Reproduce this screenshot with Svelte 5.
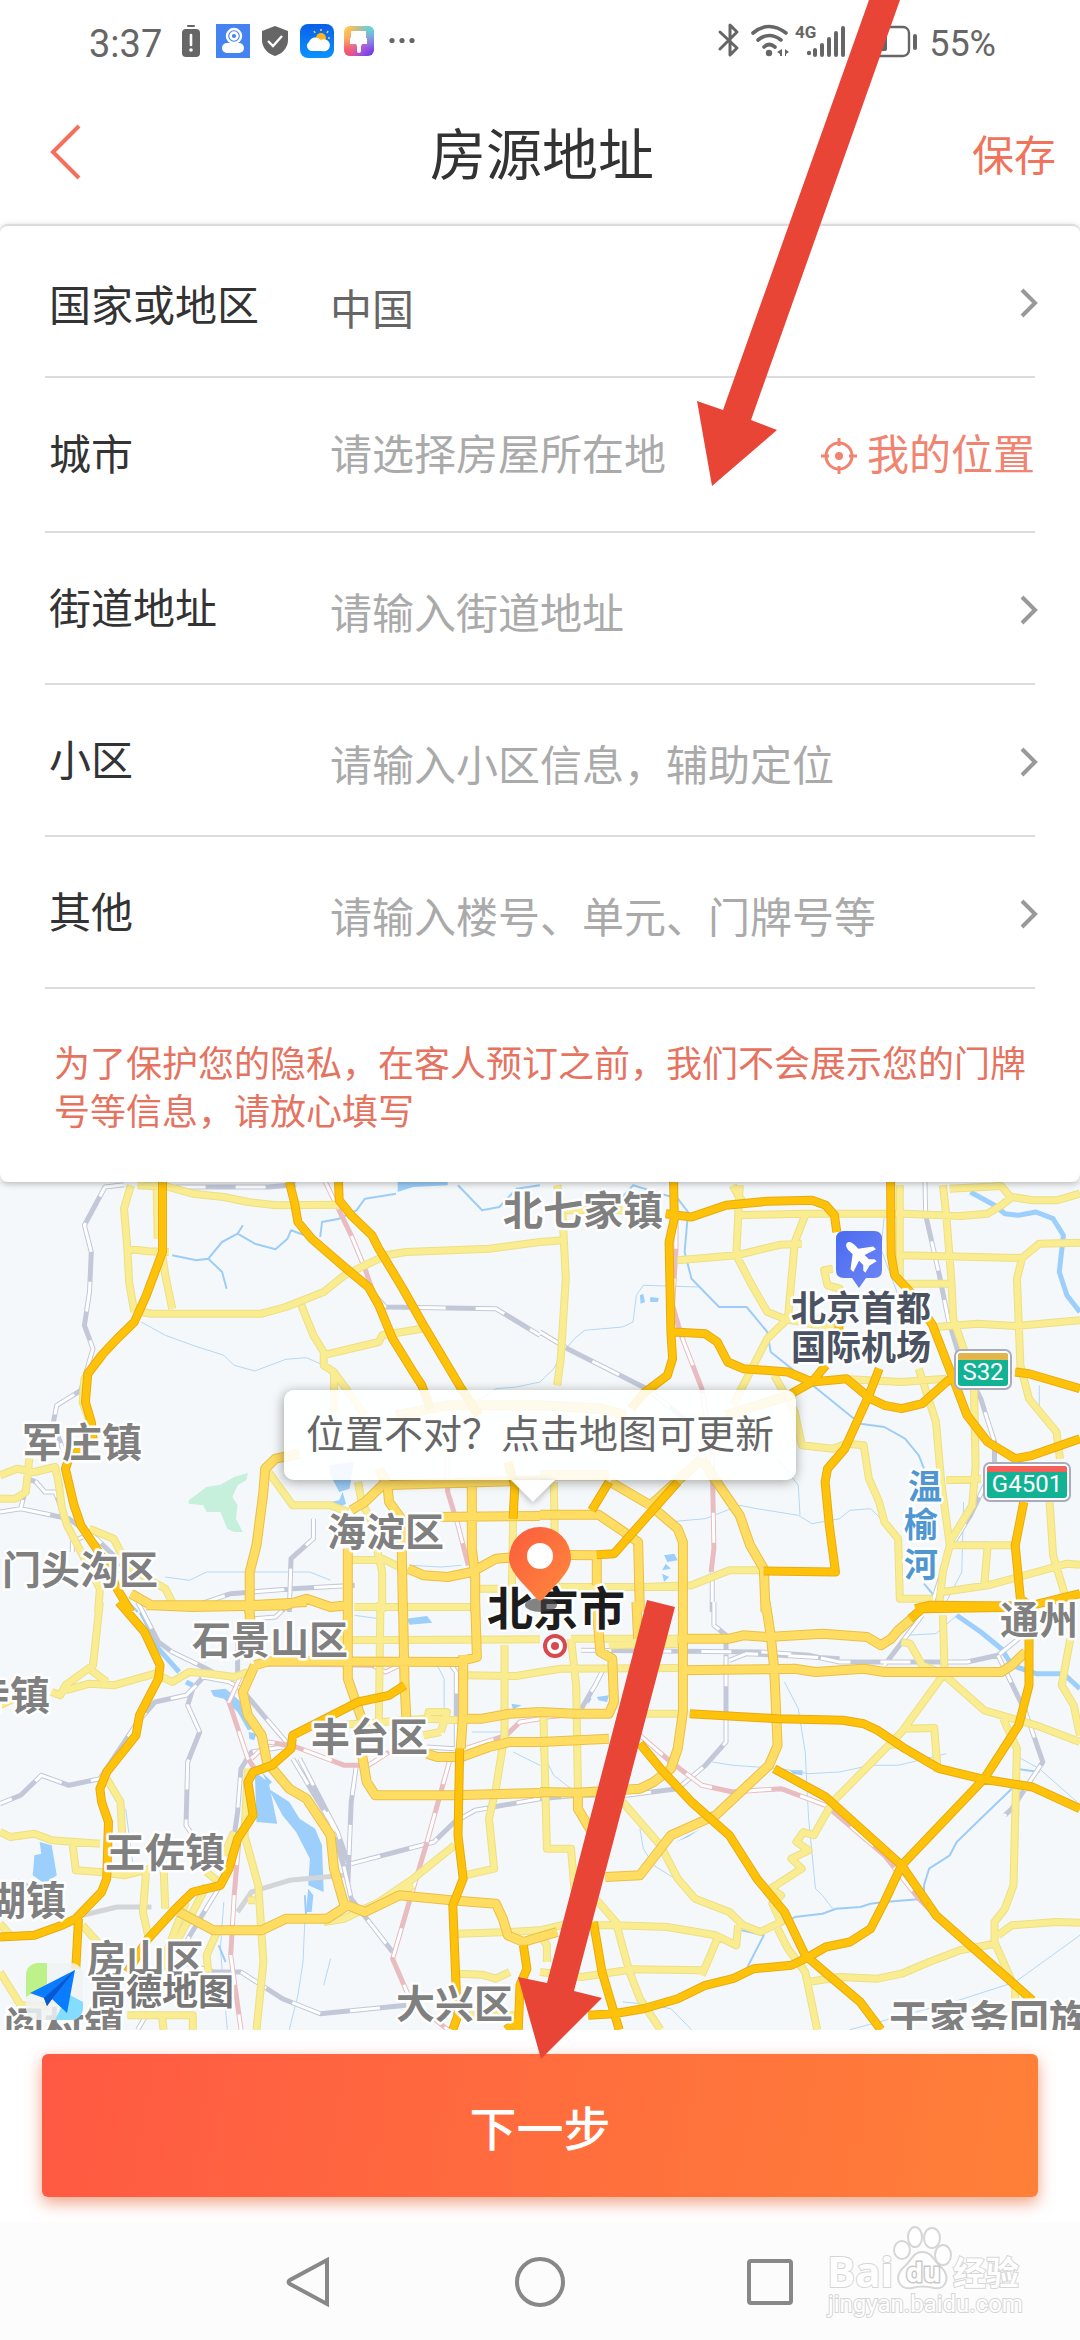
<script>
  let country = $state('中国');
  let city = $state('');

  // Map survey sheets: origin of each sheet on the 1080 x 848 map.
  const sheets = { nw: [0, -10], ne: [540, -10], sw: [0, 420], se: [540, 420] };

  // Turns "x,y x,y ..." in sheet units into a path on the map; "|" starts a new line.
  function trace(sheet, text) {
    const [ox, oy] = sheets[sheet];
    return text
      .split('|')
      .map((line) =>
        'M' +
        line
          .trim()
          .split(/\s+/)
          .map((p) => {
            const [x, y] = p.split(',').map(Number);
            return `${Math.round((x / 2.904 + ox) * 10) / 10} ${Math.round((y / 3 + oy) * 10) / 10}`;
          })
          .join('L')
      )
      .join('');
  }

  const join = (layer) => Object.entries(layer).map(([s, t]) => trace(s, t)).join('');

  const streams = join({
    nw: '410,450 480,490 560,520 650,550 680,580 740,597 830,562 890,557 930,575|1390,685 1440,650 1500,645 1568,630|480,1215 550,1225 600,1200 900,1200 960,1225|1190,1180 1280,1185 1340,1180',
    ne: '0,630 40,590 60,550 100,500 130,475 240,465 270,450 280,370 300,340 460,345|370,1050 480,1040 580,1000 630,1010 750,1030 790,1055 870,1040 900,1015 960,1010 1000,1050|690,860 750,940 755,1030|1230,990 1225,1200 1180,1290|1000,130 990,230 1040,370|1450,640 1450,700|1220,1110 1300,1110',
    sw: '885,960 880,1080 865,1180 840,1283|650,900 640,1040 660,1283|960,1070 940,1150|365,620 385,780|1030,40 1100,50|1260,170 1290,230 1290,330|1370,390 1470,390|1490,450 1568,490',
    se: '710,240 750,320 770,450 780,650 800,860 820,880 850,920|500,480 560,490 700,500 780,515 870,510 960,490 1040,490 1180,455|1380,460 1450,500 1560,600|1568,1000 1380,1140 1200,1200 900,1283|290,680 300,740 330,790 400,835|0,440 40,520 90,560|240,1200 300,1205 380,1220 440,1283|1060,100 1150,95 1210,40'
  });

  const rivers = join({
    nw: '500,250 570,265 605,260 645,210 690,185 740,215 800,232 835,200 845,175 885,190|605,260 645,300 658,350|690,185 705,160|930,195 935,150 985,140 1035,115 1060,80 1150,65|1330,40 1400,115 1450,105 1500,50 1568,40|355,1270 400,1320',
    ne: '240,75 270,40 400,80 430,120 420,240 440,320 520,405 600,405 660,480 670,540 780,630 930,755 1000,765 1060,800 1100,850 1115,890|1115,1235 1160,1290',
    sw: '885,880 890,960|635,1030 655,1080',
    se: '1370,560 1290,640 1210,720 1190,760 1130,800 1115,850 1115,890 1000,900 960,905 930,915 860,920 820,935 740,945 700,970|585,985 650,1000 600,1100|1380,500 1450,510'
  });

  const canals = join({
    ne: '1250,60 1320,100 1350,125 1390,130 1440,120 1490,140 1520,190 1508,300 1530,370 1568,420',
    sw: '410,30 440,90 460,140 520,210|540,240 560,250',
    se: '1210,40 1280,90 1340,140 1370,190 1440,215 1520,215 1568,260'
  });

  const lakes = join({
    nw: '1155,30 1300,30 1300,40 1200,45 1155,60|955,880 985,875 1028,870 1015,950 985,960 960,910|960,990 985,985 995,960 1005,995 980,1008',
    ne: '290,370 300,365 305,390 292,395|320,375 345,378 342,390 320,390|360,1150 390,1145 400,1165 370,1170|365,1175 380,1190 355,1195|355,1205 375,1215 360,1230',
    sw: '612,265 655,260 700,300 735,380 720,385 690,330 650,290 620,283|722,390 745,395 738,415 724,410|740,510 780,540 805,665 745,660|760,510 790,540 780,550|780,560 840,600 870,650 915,680 935,730 940,870 895,850 900,770 860,690 820,640|895,860 910,880 905,930 888,930|115,720 150,730 165,820 130,845 95,820 100,760 120,755|52,830 90,850 70,880|1180,50 1240,42 1255,62 1190,68|1485,305 1515,310 1490,322',
    se: '725,505 762,505 762,520 735,515|135,280 150,290 140,305|165,285 200,280 195,300 170,295|395,720 430,700 465,682 430,705'
  });

  const parks = trace(
    'nw',
    '548,985 600,945 640,938 680,915 720,903 715,925 690,940 675,975 690,1000 685,1040 705,1080 680,1080 660,1070 640,1020 600,1020 590,1000 548,995'
  );

  const minor = join({
    nw: '380,40 360,110 370,230 375,330 390,420|370,230 430,238 490,240|470,240 480,310 500,410|455,40 458,200|400,40 490,45 560,65 650,75 720,90 800,100 990,98|410,420 440,425 760,425 830,405 940,360 1000,310 1060,280 1120,250 1180,240 1420,230 1568,210|875,400 910,490 940,540 940,580 970,600 970,720|970,600 1060,730|945,548 1100,510 1110,490 1225,470|0,910 50,890 100,900 160,885 170,930 180,1010 195,1060 220,1110 270,1210 290,1250 285,1320|85,860 75,960 45,980 0,980|300,550 245,620 240,690 265,760|780,900 850,1000 960,1000 1010,1020|260,1070 330,1100 370,1180 420,1215 480,1250 500,1290|1040,930 1050,990 1080,1050|1090,1110 1110,1200 1110,1320|1020,1165 1110,1160 1170,1190|1490,1040 1485,1320|1385,1250 1480,1250|1030,1305 1380,1305',
    ne: '50,40 65,120 75,320 60,560 50,640|40,930 45,1240|0,210 65,205|75,115 240,115|400,265 570,250 700,218 760,215|580,40 570,250 610,330 660,420 710,440|570,130 760,125 1060,125 1220,132 1300,125 1340,100 1370,75 1430,85 1500,85 1568,65|770,130 740,210 720,440 660,500 620,580 560,700|710,440 860,470|1150,465 1270,455 1380,462 1568,445|1045,40 1045,330|1170,40 1180,130 1195,330 1200,440 1230,530 1260,640 1265,880 1255,1000 1190,1110|1190,50 1340,42 1370,80|1050,250 1400,258 1450,215 1568,212|1400,258 1385,320 1395,580 1420,680 1500,780 1510,860|1050,335 1190,335|870,620 1050,630 1180,620|680,610 740,720 760,820 850,830 890,815 940,820 955,920 985,990 1000,1050 1040,1100 1045,1280 1140,1280|1100,590 1150,750 1165,930 1190,1120 1170,1200 1160,1290|1180,925 1280,920|1190,1120 1390,1120|1480,990 1490,1150 1525,1270|1390,1215 1530,1175 1568,1178|1170,1260 1300,1240 1390,1215|1300,1120 1290,1240|850,290 825,295 835,340 870,350 865,450|300,1245 440,1240 550,1195 650,1195|0,1245 400,1245|560,40 575,70 590,90',
    sw: '290,0 270,190 190,250 175,280 150,270|0,310 40,290|190,265 260,245 330,250 450,215 500,240 550,210 610,215 680,225 720,210|265,205 310,240|310,530 350,600 355,700|0,690 30,705 100,695 150,715 290,725|210,720 220,805 290,810 360,820 440,800|425,800 415,930 430,1000|475,800 480,920|240,970 300,1040|720,500 710,700 750,850 765,1080 745,1283|600,810 635,840|600,850 560,930 470,1100|630,990 600,1060 605,1110|680,690 650,760|540,900 480,1060|940,115 1568,112|1105,0 1100,360|980,370 1240,350 1330,355|1465,130 1465,400 1440,560 1420,650 1435,800 1350,820|1360,220 1500,222 1568,210|1280,390 1298,330 1245,330 1240,360|1230,400 1280,390|1330,995 1480,990 1568,985|1330,1115 1400,1118 1440,1130 1480,1110|1320,730 1200,830 1100,900 1000,950 940,960|1170,870 1200,850|0,1110 60,1210 200,1215|370,1240 560,1240 560,1283|470,1240 475,1283|0,965 30,1000|1345,1240 1500,1240|720,895 740,895',
    se: '90,110 400,110|0,210 60,200 400,198|90,110 105,250 110,560|10,340 20,740 90,740 100,860 170,900 220,960 260,1110 290,1190 350,1283|230,335 400,335|200,130 420,125|240,600 350,730 400,830 450,890 550,930 590,970 640,990 700,960 675,905 700,880 670,860 760,800 730,770 780,745 745,720 765,690 795,700 850,600 1050,390 1170,220|1170,40 1175,210|1050,120 1075,125 1110,190 1170,215 1290,325 1440,370 1568,420|1060,380 1145,378 1155,510|1345,350 1385,440 1375,850 1350,920 1320,960 1320,1020 1380,1160 1380,1200|1330,1000 1370,970 1500,960 1568,962|1540,110 1515,250 1550,310 1568,400|780,1140 870,1125 980,1130 1050,1115 1130,1080 1220,1045 1320,1025|690,980 720,1040 770,1110 805,1283|0,985 60,970 220,970 370,975 510,1000 570,1030 575,970|515,1010 470,1120|0,1110 120,1125 270,1102 470,1105|0,1000 20,1030 20,1080|1010,430 1050,425'
  });

  const trunk = join({
    nw: '870,845 800,860 770,890 765,960 745,1120 725,1200 725,1340|380,1265 440,1300 560,1305 830,1300 890,1280 960,1305 1010,1300|1010,1320 1010,1130|1020,1015 1060,990 1110,940 1568,925|1100,890 1125,940 1130,990 1165,1040 1170,1320|1370,930 1370,1130 1380,1210 1380,1320|1250,1035 1568,1032|1185,1190 1230,1210 1300,1215 1370,1200 1440,1160 1568,1150|1150,730 1300,700 1568,700',
    ne: '0,1028 170,1028 230,1070 285,1110 290,1320|205,930 320,1000 400,1070 415,1110 415,1320|470,860 500,910 580,1030 610,1120 650,1190 655,1320|0,1148 165,1150 165,1240|470,860 310,1010|0,700 180,710 250,730|0,910 200,910|740,665 540,730',
    sw: '425,10 545,10 720,10 890,0|720,0 728,60|740,190 780,178 1330,180 1385,165 1380,0|740,190 705,270 720,340 760,400 775,480 840,560 890,590 960,700 970,800 1000,910|1010,0 1010,230 1050,350|1170,0 1175,250 1180,345|1345,160 1345,330 1338,440|1350,350 1400,350 1480,335 1568,330|1330,465 1270,465 1240,455|1340,465 1420,435 1480,420 1568,420|1050,450 1065,540 1090,580 1320,580 1568,573|520,930 620,985 760,985 830,950 950,950 1010,910 1060,930 1160,880 1310,895 1440,905 1460,950 1475,1000 1520,1020 1568,1005',
    se: '400,110 550,110 590,100 660,105 820,95 950,105 990,130 1020,110 1040,85 1080,50|410,205 740,200 800,210 940,200 1000,210 1340,210 1370,190 1410,150|280,0 285,110|415,0 415,330 400,440 380,500 330,540 290,560 110,572 0,570|655,0 670,100 680,200 690,430 665,490 510,640 380,700 290,820 190,825|165,20 175,150 210,170 215,300 200,335 100,335 0,330|0,420 110,415 200,410|110,560 110,620 150,690|0,1005 50,990'
  });

  const freeway = join({
    nw: '472,30 472,240 425,370 390,450 340,500 295,550 255,605 248,690 265,750 270,800 200,860 190,890 215,1000 235,1060 300,1160 340,1250 380,1320|840,30 855,90 865,150 905,200 1000,285 1070,345 1100,400 1140,500 1200,600 1225,640 1250,710|983,30 985,85 1020,130 1080,190 1100,230 1170,350 1230,460 1340,650 1390,730|1475,870 1495,940 1490,1040',
    ne: '388,30 390,140 375,210 380,480 385,560 370,610 300,665 265,710|365,125 440,135 540,100 660,88 790,85 830,100 855,130 862,180|1018,30 1020,250 1030,310 1080,365 1140,460 1200,620 1240,730 1300,810 1380,860 1430,850 1568,800|390,480 480,485 515,510 545,570 590,590 720,600 790,630 890,620 960,680 1000,700 1050,710 1110,695 1180,630 1200,615|1380,600 1420,605 1568,650|985,590 955,670 885,830 835,890 828,930 840,1060 858,1200 650,1197|830,580 790,630 730,665|400,930 215,1145 165,1148|200,930 150,1015|1405,990 1380,1120 1395,1280 1420,1300|1090,1310 1130,1300 1420,1302 1568,1265|868,440 868,475',
    sw: '345,0 420,90 465,190 460,230 405,340 395,400 310,510 290,560 295,600 315,660 310,830 295,870 220,950 180,970 100,1000 0,1005|228,950 220,1100|1175,250 1130,280 1040,300 850,400 845,440 790,490 735,510 720,540 735,640 690,710 665,800 640,850 560,870 510,920 430,1010 400,1060 370,1110|1335,440 1330,700 1345,830 1315,910 1325,1170 1330,1240 1315,1283|1520,1030 1530,1100 1510,1150 1505,1283|1470,1283 1510,1250',
    se: '435,335 690,350 880,355 940,365 980,385 1060,440 1160,500 1280,530 1430,555 1568,620|290,425 350,500 440,600 550,700 630,830 710,930 770,1060 850,1130 930,1200 990,1283|680,500 830,585 1050,790 1150,940 1430,1195|1420,110 1420,250 1390,370 1290,530 1050,790 1000,900 960,980 900,1020 830,1035 780,1065 730,1090 620,1100 560,1130 480,1150 400,1190 300,1220 215,1235 140,1240|155,960 180,1110 230,1283|1075,50 1110,20 1440,15'
  });

  const rail = join({
    nw: '360,38 305,45 245,160 265,240 260,360 245,460 270,530 235,655 165,700 155,750 185,840|510,45 600,45 780,45 860,38|1060,340 1120,405 1440,410 1568,490|0,1020 60,1010 75,950 80,920 105,930 130,960 160,960 175,1000|60,1010 200,1040 280,1100 330,1150 350,1200|240,1095 210,1110 210,1140|910,1040 910,1100 845,1160 840,1320|570,1300 670,1265 850,1250 1030,1240',
    ne: '0,480 80,530 310,650 420,740|1118,30 1120,130 1160,310 1185,440 1220,560 1280,680 1320,810 1320,880 1250,1030 1190,1130 1140,1290|500,1200 500,1320',
    sw: '400,0 430,60 460,120 500,150 600,200 700,260 790,370 840,430|850,470 960,660 1000,800 1020,890 1140,1050|670,240 590,225 560,260 545,310 580,390 545,480 540,670 560,700|570,250 540,280 450,300 400,360 290,530 200,550 120,520 60,580 0,605|740,50 800,45 825,20|870,470 980,690 1010,780|1035,490 1020,600 1010,850|1310,190 1325,210 1325,440|1240,435 1320,440|1020,785 1260,720 1320,660 1380,625 1568,590|820,435 730,450 700,500 690,630 680,700|640,850 540,1020|530,1080 620,1110 700,1110 820,1190 930,1235 1180,1210|690,80 690,220|400,1283 430,1230',
    se: '505,0 505,70 540,100 540,420 480,490 400,560 250,580 110,580 0,590|120,145 640,150 780,160 870,180 1240,180 1330,160 1390,110|550,175 600,155 700,160 870,170|1110,40 1000,190|1330,160 1410,330 1460,480 1370,620 1350,640|190,190 160,250 120,320'
  });

  const metro = join({
    nw: '945,30 1020,190 1060,290 1090,380 1140,500 1210,620|1298,850 1300,960 1330,1060 1360,1180',
    ne: '395,140 395,230 385,400 410,490 470,650 500,850 505,1130 497,1200',
    sw: '700,220 665,300 720,470 740,500|740,190 800,185 1080,190 1120,210 1160,190|730,470 780,420 860,435 1000,490 1070,490 1130,450|1310,460 1240,720 1180,930 1140,1070 1190,1190 1300,1283|695,700 680,880 670,1060 700,1283|1350,440 1470,400 1510,360 1568,350',
    se: '290,400 380,480 470,550 560,570 700,560 830,610 1000,760 1100,890 1160,950|20,345 70,340'
  });

  const tunnel = trace('sw', '240,940 340,915 440,915|690,930 730,870 840,835 1000,820');

  const towns = [
    [503, 43, '北七家镇'],
    [22, 275, '军庄镇'],
    [-30, 528, '寺镇'],
    [105, 685, '王佐镇'],
    [-14, 733, '湖镇'],
    [4, 859, '阎村镇'],
    [889, 852, '于家务回族']
  ];

  const districts = [
    [327, 364, '海淀区'],
    [2, 402, '门头沟区'],
    [192, 472, '石景山区'],
    [311, 569, '丰台区'],
    [1000, 452, '通州'],
    [87, 791, '房山区'],
    [396, 836, '大兴区']
  ];

  const fields = [
    { id: 'street', label: '街道地址', hint: '请输入街道地址' },
    { id: 'estate', label: '小区', hint: '请输入小区信息，辅助定位' },
    { id: 'other', label: '其他', hint: '请输入楼号、单元、门牌号等' }
  ];
  const values = $state({ street: '', estate: '', other: '' });
</script>

{#snippet chevron()}
  <svg class="chevron" viewBox="0 0 20 32" aria-hidden="true"><path d="M3 3L16 16L3 29" /></svg>
{/snippet}

<div class="screen">
  <div class="status">
    <div class="group">
      <time class="clock">3:37</time>
      <svg class="tray" viewBox="0 0 236 40" aria-hidden="true">
        <defs>
          <linearGradient id="sky" x1="0" y1="0" x2="0" y2="1"><stop offset="0" stop-color="#0a5fe8" /><stop offset="1" stop-color="#0a93ff" /></linearGradient>
          <linearGradient id="rainbow" x1="0" y1="0" x2="1" y2="1"><stop offset="0" stop-color="#ffd24a" /><stop offset=".35" stop-color="#f9a36a" /><stop offset=".65" stop-color="#b558d8" /><stop offset="1" stop-color="#5a3cf0" /></linearGradient>
          <radialGradient id="aqua" cx="1" cy="0" r=".8"><stop offset="0" stop-color="#45e8ea" /><stop offset="1" stop-color="#45e8ea" stop-opacity="0" /></radialGradient>
          <radialGradient id="rose" cx="0" cy="1" r=".6"><stop offset="0" stop-color="#ff4560" /><stop offset="1" stop-color="#ff4560" stop-opacity="0" /></radialGradient>
        </defs>
        <rect x="5" y="5" width="8" height="2" rx="1" fill="#666" />
        <rect x="0" y="9" width="18" height="28" rx="4" fill="#666" />
        <path d="M9 15V25" stroke="#fff" stroke-width="2.6" stroke-linecap="round" /><circle cx="9" cy="30" r="1.8" fill="#fff" />
        <rect x="34" y="4" width="34" height="34" fill="#4583f0" />
        <circle cx="52" cy="16" r="7" fill="#4583f0" stroke="#fff" stroke-width="2.4" />
        <circle cx="52" cy="16" r="3.4" fill="none" stroke="#fff" stroke-width="2.6" />
        <rect x="40" y="23" width="22" height="10" rx="5" fill="#fff" />
        <path d="M93 6L106 11V20C106 28 100 34 93 36C86 34 80 28 80 20V11Z" fill="#666" />
        <path d="M86 21L91 26L100 16" fill="none" stroke="#fff" stroke-width="2.4" />
        <rect x="118" y="4" width="34" height="34" rx="8" fill="url(#sky)" />
        <circle cx="139" cy="18" r="5" fill="#ffb61e" />
        <path d="M139 11V9M145 13L146 11M133 13L132 11M146 18H148M145 23L147 24" stroke="#ffc94a" stroke-width="1.6" />
        <path d="M130 31A5 5 0 0 1 127 22A7 7 0 0 1 139 20A6 6 0 1 1 140 31Z" fill="#fff" />
        <rect x="162" y="6" width="30" height="30" rx="6" fill="url(#rainbow)" />
        <rect x="162" y="6" width="30" height="30" rx="6" fill="url(#aqua)" />
        <rect x="162" y="6" width="30" height="30" rx="6" fill="url(#rose)" />
        <path d="M169 11H184V18H185V24H180L179 26V31A2 2 0 0 1 175 31V26L174 24H168V18H169Z" fill="#fff" />
        <circle cx="210" cy="20.500" r="2.600" fill="#666" /><circle cx="220" cy="20.500" r="2.600" fill="#666" /><circle cx="230" cy="20.500" r="2.600" fill="#666" />
      </svg>
    </div>
    <div class="group">
      <svg class="radio" viewBox="0 0 204 40" aria-hidden="true">
        <g fill="none" stroke="#666" stroke-width="3" stroke-linecap="round" stroke-linejoin="round">
          <path d="M3 12L20 28L13 35V5L20 12L3 29" />
          <path d="M36 13Q52 0 69 13M41 20Q52 11 64 20M47 27Q52 22 58 27" stroke-width="3.600" />
          <path d="M104 35V30M111 35V25M118 35V19M125 35V13M132 35V8" stroke-width="4" transform="translate(-6)" />
        </g>
        <circle cx="52" cy="33" r="3.200" fill="#666" />
        <path d="M65 29V36H63V34L60 32ZM67 29V36M68 29L72 32L69 34V36H68Z" fill="#666" />
        <text class="gen" x="78" y="18">4G</text>
        <circle cx="92" cy="33" r="2.200" fill="#666" />
        <rect x="154" y="7" width="38" height="29" rx="6" fill="none" stroke="#666" stroke-width="2.400" />
        <rect x="158" y="11" width="12" height="20" rx="2" fill="#666" />
        <rect x="196" y="14" width="4" height="16" rx="2" fill="#666" />
      </svg>
      <span class="charge">55%</span>
    </div>
  </div>

  <header class="bar">
    <button class="back" aria-label="返回">
      <svg viewBox="0 0 32 56" aria-hidden="true"><path d="M29 2L3 28L29 54" /></svg>
    </button>
    <h1>房源地址</h1>
    <button class="save">保存</button>
  </header>

  <main>
    <form class="card" onsubmit={(e) => e.preventDefault()}>
      <div class="row country">
        <label for="country">国家或地区</label>
        <select id="country" bind:value={country}><option>中国</option></select>
        {@render chevron()}
      </div>
      <div class="row city">
        <label for="city">城市</label>
        <input id="city" placeholder="请选择房屋所在地" bind:value={city} />
        <button type="button" class="locate">
          <svg viewBox="0 0 36 36" aria-hidden="true">
            <circle cx="18" cy="18" r="13" /><path d="M18 0V8M18 28V36M0 18H8M28 18H36" /><circle class="dot" cx="18" cy="18" r="4" />
          </svg>
          我的位置
        </button>
      </div>
      {#each fields as field (field.id)}
        <div class="row typed">
          <label for={field.id}>{field.label}</label>
          <input id={field.id} placeholder={field.hint} bind:value={values[field.id]} />
          {@render chevron()}
        </div>
      {/each}
      <p class="notice">为了保护您的隐私，在客人预订之前，我们不会展示您的门牌号等信息，请放心填写</p>
    </form>

    <section class="map" aria-label="地图">
      <svg class="canvas" viewBox="0 0 1080 848">
        <defs>
          <linearGradient id="pin" x1="0" y1="0" x2="1" y2="1"><stop offset="0" stop-color="#fb5b3d" /><stop offset="1" stop-color="#ff8a3c" /></linearGradient>
          <linearGradient id="plane" x1="0" y1="0" x2="1" y2="1"><stop offset="0" stop-color="#4a6bf0" /><stop offset="1" stop-color="#6f86f5" /></linearGradient>
          <clipPath id="tile"><rect x="26" y="781" width="57" height="57" rx="12" /></clipPath>
        </defs>
        <path d={parks} fill="#c6efdc" />
        <path d={lakes} fill="#9ccffb" />
        <g class="lines">
          <path d={streams} stroke="#b4d8f6" stroke-width="1" />
          <path d={rivers} stroke="#9dcdf7" stroke-width="2" />
          <path d={canals} stroke="#9ccffb" stroke-width="5" />
          <path d={tunnel} stroke="#d3d5d9" stroke-width="5" />
          <path d={rail} stroke="#c3c8d9" stroke-width="5" />
          <path d={rail} class="ties" />
          <path d={metro} stroke="#e8bcc0" stroke-width="5" />
          <path d={metro} class="ties" />
          <path d={minor} stroke="#ecdf86" stroke-width="8" />
          <path d={minor} stroke="#faec90" stroke-width="6" />
          <path d={trunk} stroke="#e8c04a" stroke-width="10" />
          <path d={trunk} stroke="#ffdc62" stroke-width="8" />
          <path d={freeway} stroke="#e6ac10" stroke-width="9" />
          <path d={freeway} stroke="#ffc20a" stroke-width="7" />
        </g>
        {#each towns as [x, y, name]}
          <text class="town" {x} {y}>{name}</text>
        {/each}
        {#each districts as [x, y, name]}
          <text class="district" {x} {y}>{name}</text>
        {/each}
        <text class="airport" x="791" y="139">北京首都</text>
        <text class="airport" x="791" y="178">国际机场</text>
        <path d="M844 49H874Q882 49 882 57V88Q882 96 874 96H866L859 106L852 96H844Q836 96 836 88V57Q836 49 844 49Z" fill="url(#plane)" />
        <path transform="translate(859 73) rotate(-45)" d="M0 -17C3 -17 4 -13 4 -10V-5L16 4V8L4 4V10L8 14V17L0 15L-8 17V14L-4 10V4L-16 8V4L-4 -5V-10C-4 -13 -3 -17 0 -17Z" fill="#fff" />
        <g class="water"><text x="908" y="317">温</text><text x="904" y="355">榆</text><text x="904" y="395">河</text></g>
        <g class="shield">
          <rect x="955" y="168" width="56" height="39" rx="6" />
          <rect class="green" x="958" y="171" width="50" height="33" rx="3" />
          <path d="M958 178V174Q958 171 961 171H1005Q1008 171 1008 174V178Z" fill="#e3b64c" />
          <text x="983" y="198">S32</text>
          <rect x="984" y="281" width="86" height="38" rx="6" />
          <rect class="green" x="987" y="284" width="80" height="32" rx="3" />
          <path d="M987 290V287Q987 284 990 284H1064Q1067 284 1067 287V290Z" fill="#f5605a" />
          <text x="1027" y="310">G4501</text>
        </g>
        <text class="capital" x="487" y="443">北京市</text>
        <circle cx="555" cy="464" r="10" fill="#fff" stroke="#d8484f" stroke-width="4" /><circle cx="555" cy="464" r="4" fill="#d8484f" />
        <ellipse cx="541" cy="423" rx="16" ry="7" fill="#444" opacity=".65" />
        <path d="M540 345A31 31 0 0 1 571 376C571 390 556 402 544 416Q540 421 536 416C524 402 509 390 509 376A31 31 0 0 1 540 345Z" fill="url(#pin)" />
        <circle cx="540" cy="374" r="13" fill="#fff" />
        <g clip-path="url(#tile)">
          <rect x="26" y="781" width="57" height="57" fill="#eef3f3" opacity=".85" />
          <path d="M26 781H47V802L26 815Z" fill="#bdf28a" /><path d="M55 838L68 812L83 820V838Z" fill="#84dcff" />
        </g>
        <path d="M75 788L30 811L44 816L47 824L52 817L67 831Z" fill="#0a7cff" /><path d="M75 788L44 816L47 824L52 817Z" fill="#0a58d0" />
        <text class="brand" x="90" y="823">高德地图</text>
      </svg>
      <button class="tip">位置不对？点击地图可更新</button>
    </section>

    <div class="action">
      <button class="next">下一步</button>
    </div>
  </main>

  <nav class="keys" aria-label="系统导航">
    <button aria-label="后退"><svg viewBox="0 0 52 52"><path d="M43 4V48L6 28Q3 26 6 24Z" /></svg></button>
    <button aria-label="主页"><svg viewBox="0 0 52 52"><circle cx="26" cy="26" r="23" /></svg></button>
    <button aria-label="最近任务"><svg viewBox="0 0 52 52"><rect x="5" y="5" width="42" height="42" rx="2" /></svg></button>
  </nav>

  <svg class="mark" viewBox="0 0 220 110" aria-hidden="true">
    <text class="bold" x="15" y="65">Bai</text>
    <g class="paw">
      <ellipse cx="90" cy="28" rx="8" ry="9" /><ellipse cx="103" cy="15" rx="7" ry="10" /><ellipse cx="120" cy="16" rx="8" ry="10" /><ellipse cx="131" cy="33" rx="8" ry="10" />
      <path d="M110 30C120 30 121 38 128 44C139 54 135 68 122 66Q110 63 100 66C86 68 81 54 93 44C100 38 101 30 110 30Z" />
    </g>
    <text class="du" x="94" y="60">du</text>
    <text class="cn" x="141" y="63">经验</text>
    <text class="url" x="16" y="90">jingyan.baidu.com</text>
  </svg>

  <svg class="arrows" viewBox="0 0 1080 2340" aria-hidden="true">
    <path d="M869 0H900L751 420L777 430L712 486L697 401L723 410Z" />
    <path d="M647 1600L675 1607L574 1991L602 1998L541 2059L518 1977L547 1983Z" />
  </svg>
</div>

<style>
  :global(body) {
    margin: 0;
    background: #fff;
  }
  .screen {
    position: relative;
    overflow: hidden;
    font-family: Roboto, 'Noto Sans CJK SC', sans-serif;
    color: #333;
  }
  button,
  input,
  select {
    font: inherit;
    color: inherit;
    border: 0;
    padding: 0;
    margin: 0;
    background: none;
    appearance: none;
    outline: 0;
  }
  button {
    cursor: pointer;
  }
  svg {
    display: block;
  }
  .status {
    display: flex;
    justify-content: space-between;
    height: 80px;
    padding: 0 84px 0 89px;
    font-size: 38px;
    line-height: 88px;
    color: #666;
  }
  .group {
    display: flex;
    align-items: flex-start;
    gap: 20px;
  }
  .tray {
    width: 236px;
    height: 40px;
    margin-top: 20px;
  }
  .radio {
    width: 204px;
    height: 40px;
    margin-top: 20px;
  }
  .group:last-child {
    gap: 8px;
  }
  .gen {
    font: 700 17px Roboto, sans-serif;
    fill: #666;
  }
  .charge {
    font-size: 36px;
  }
  .bar {
    display: grid;
    grid-template-columns: 1fr auto 1fr;
    align-items: center;
    height: 144px;
    padding: 0 24px 0 50px;
  }
  .back {
    justify-self: start;
  }
  .back svg {
    width: 32px;
    height: 56px;
  }
  .back path {
    fill: none;
    stroke: #f3705c;
    stroke-width: 4;
  }
  h1 {
    margin: 0;
    padding: 8px 22px 0 0;
    font-size: 56px;
    font-weight: 400;
    line-height: 80px;
  }
  .save {
    justify-self: end;
    font-size: 42px;
    color: #f0735c;
  }
  .card {
    position: relative;
    z-index: 1;
    padding: 0 45px 45px;
    border-top: 2px solid #dcdcdc;
    border-radius: 8px;
    background: #fff;
    box-shadow: 0 2px 6px rgba(0, 0, 0, 0.25);
    font-size: 42px;
    line-height: 60px;
  }
  .row {
    display: flex;
    align-items: center;
    height: 147px;
    border-bottom: 2px solid #dcdcdc;
    padding-top: 3px;
  }
  .row.city {
    height: 150px;
  }
  label {
    flex: none;
    width: 281px;
    padding-left: 4px;
  }
  select,
  input {
    flex: 1;
    min-width: 0;
    height: 60px;
    color: #666;
  }
  .country label,
  .country select {
    padding-top: 8px;
  }
  .typed input {
    padding-top: 10px;
  }
  input::placeholder {
    color: #aaa;
    opacity: 1;
  }
  .chevron {
    width: 20px;
    height: 32px;
    margin-right: -4px;
  }
  .chevron path {
    fill: none;
    stroke: #999;
    stroke-width: 4;
  }
  .locate {
    display: flex;
    align-items: center;
    gap: 10px;
    color: #f08470;
  }
  .locate svg {
    width: 36px;
    height: 36px;
    fill: none;
    stroke: #f08470;
    stroke-width: 3;
  }
  .locate .dot {
    fill: #f08470;
    stroke: none;
  }
  .notice {
    margin: 0;
    padding: 52px 0 0 9px;
    font-size: 36px;
    line-height: 48px;
    color: #e57360;
  }
  .map {
    position: relative;
    background: #f5f8fa;
  }
  .canvas {
    width: 100%;
    height: auto;
  }
  .lines {
    fill: none;
    stroke-linejoin: round;
  }
  .ties {
    stroke: #fff;
    stroke-width: 3;
    stroke-dasharray: 30 30;
  }
  .canvas text {
    font-family: Roboto, 'Noto Sans CJK SC', sans-serif;
    font-weight: 700;
    paint-order: stroke;
    stroke: #fff;
    stroke-width: 5px;
    stroke-linejoin: round;
  }
  .canvas .town {
    font-size: 40px;
    fill: #808080;
  }
  .canvas .district {
    font-size: 39px;
    fill: #808080;
  }
  .canvas .airport {
    font-size: 35px;
    fill: #4b5262;
  }
  .canvas .water text {
    font-size: 34px;
    fill: #4f97d3;
  }
  .canvas .capital {
    font-size: 46px;
    fill: #1c1c1c;
  }
  .canvas .brand {
    font-size: 36px;
    fill: #777;
  }
  .shield rect {
    fill: #fff;
    stroke: #a9adbb;
    stroke-width: 2;
  }
  .shield .green {
    fill: #12b394;
    stroke: none;
  }
  .canvas .shield text {
    font-size: 24px;
    font-weight: 400;
    fill: #fff;
    stroke: none;
    text-anchor: middle;
  }
  .tip {
    position: absolute;
    left: 50%;
    top: 208px;
    transform: translateX(-50%);
    padding: 0 22px;
    border-radius: 10px;
    background: rgba(255, 255, 255, 0.88);
    box-shadow: 0 2px 12px rgba(0, 0, 0, 0.35);
    font-size: 39px;
    line-height: 90px;
    white-space: nowrap;
    color: #666;
  }
  .tip::after {
    content: '';
    position: absolute;
    left: 50%;
    top: 100%;
    margin-left: -29px;
    border: 22px solid transparent;
    border-top-color: #fff;
    border-bottom: 0;
    filter: drop-shadow(0 2px 3px rgba(0, 0, 0, 0.25));
  }
  .action {
    padding: 24px 42px 25px;
  }
  .next {
    display: block;
    width: 100%;
    height: 143px;
    border-radius: 6px;
    background: linear-gradient(100deg, #ff5943, #ff8038);
    box-shadow: 0 6px 16px rgba(226, 90, 40, 0.55);
    font-size: 47px;
    font-weight: 500;
    color: #fff;
  }
  .keys {
    display: flex;
    justify-content: center;
    gap: 178px;
    height: 120px;
    background: #fcfcfc;
  }
  .keys svg {
    width: 52px;
    height: 52px;
    fill: none;
    stroke: #888;
    stroke-width: 4;
  }
  .mark {
    position: absolute;
    right: 48px;
    bottom: 10px;
    width: 220px;
    height: 110px;
    fill: #fff;
    stroke: #d6d6d6;
    stroke-width: 2px;
  }
  .mark text {
    paint-order: stroke;
    font-family: 'Open Sans', 'Noto Sans CJK SC', sans-serif;
  }
  .mark .bold {
    font-size: 42px;
    font-weight: 700;
  }
  .mark .du {
    font-size: 27px;
    font-weight: 700;
    stroke: #c9c9c9;
    stroke-width: 3px;
  }
  .mark .cn {
    font-size: 33px;
    font-weight: 700;
  }
  .mark .url {
    font-family: Roboto, sans-serif;
    font-size: 24px;
  }
  .arrows {
    position: absolute;
    left: 0;
    top: 0;
    z-index: 2;
    width: 100%;
    fill: #e94537;
    pointer-events: none;
  }
</style>
